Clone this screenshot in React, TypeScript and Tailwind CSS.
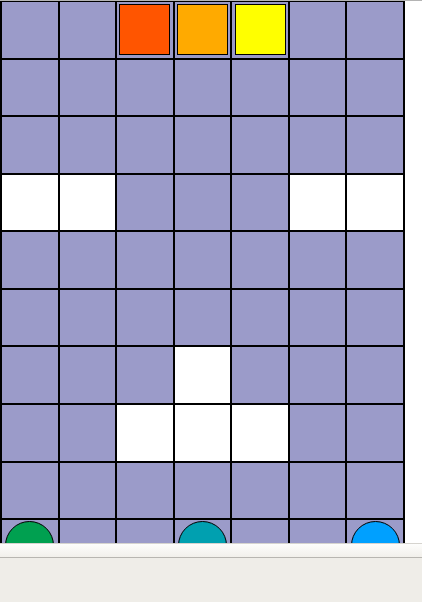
import React from "react";

type Cell = "p" | "w" | "r" | "o" | "y" | "g" | "t" | "b";

const rows: Cell[][] = [
  ["p", "p", "r", "o", "y", "p", "p"],
  ["p", "p", "p", "p", "p", "p", "p"],
  ["p", "p", "p", "p", "p", "p", "p"],
  ["w", "w", "p", "p", "p", "w", "w"],
  ["p", "p", "p", "p", "p", "p", "p"],
  ["p", "p", "p", "p", "p", "p", "p"],
  ["p", "p", "p", "w", "p", "p", "p"],
  ["p", "p", "w", "w", "w", "p", "p"],
  ["p", "p", "p", "p", "p", "p", "p"],
  ["g", "p", "p", "t", "p", "p", "b"],
];

function Square({ color }: { color: string }) {
  return (
    <div className="flex h-full w-full items-center justify-center">
      <div className={`h-[51px] w-[51px] border border-black ${color}`} />
    </div>
  );
}

function Disc({ color }: { color: string }) {
  return (
    <div className="flex h-full w-full justify-center pt-[1px]">
      <div className={`h-[49px] w-[49px] rounded-full border border-black ${color}`} />
    </div>
  );
}

function GridCell({ kind }: { kind: Cell }) {
  const bg = kind === "w" ? "bg-white" : "bg-[#9b9bc9]";
  return (
    <div className={`aspect-square overflow-hidden ${bg}`}>
      {kind === "r" && <Square color="bg-[#ff5500]" />}
      {kind === "o" && <Square color="bg-[#ffaa00]" />}
      {kind === "y" && <Square color="bg-[#ffff00]" />}
      {kind === "g" && <Disc color="bg-[#00a050]" />}
      {kind === "t" && <Disc color="bg-[#00a0b0]" />}
      {kind === "b" && <Disc color="bg-[#00a0ff]" />}
    </div>
  );
}

export default function App() {
  return (
    <div className="flex h-[602px] w-[422px] flex-col overflow-hidden bg-white">
      <div className="h-[543px] overflow-hidden border-t border-[#b4b4b4]">
        <div className="grid w-[405px] grid-cols-7 gap-[2px] bg-black px-[2px] pt-[1px] pb-[2px]">
          {rows.map((row, i) =>
            row.map((c, j) => <GridCell key={`${i}-${j}`} kind={c} />)
          )}
        </div>
      </div>
      <div className="h-[14px] border-t border-[#d6d4cf] bg-gradient-to-b from-[#fdfdfc] to-[#f2f0eb]" />
      <div className="flex-1 border-t border-[#b8b6b1] bg-[#efede8]" />
    </div>
  );
}
